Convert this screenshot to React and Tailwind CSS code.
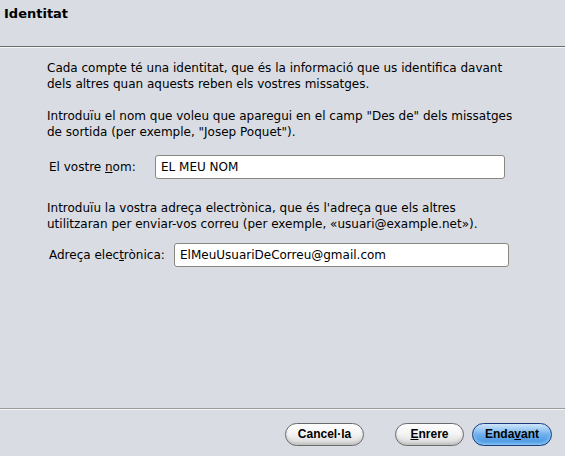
export default function App() {
    const font = { fontFamily: '"DejaVu Sans", sans-serif' };
    return (
        <div className="w-[565px] h-[456px] bg-[#d9dce3] flex flex-col text-black text-[12px]" style={font}>
            <div className="h-[46px] pl-[4px] pt-[4px] font-bold text-[13px]">Identitat</div>
            <div className="h-px bg-[#6e6e6e]" />
            <div className="h-px bg-[#f4f5f7]" />
            <div className="flex-1 pl-[47px] pr-[40px] pt-[12px] leading-[16px]">
                <p>Cada compte té una identitat, que és la informació que us identifica davant<br />dels altres quan aquests reben els vostres missatges.</p>
                <p className="mt-[16px]">Introduïu el nom que voleu que aparegui en el camp "Des de" dels missatges<br />de sortida (per exemple, "Josep Poquet").</p>
                <div className="flex items-center mt-[15px] pl-[2px]">
                    <label className="w-[106px]">El vostre <span className="underline">n</span>om:</label>
                    <input defaultValue="EL MEU NOM" className="w-[350px] h-[24px] bg-white border border-[#8a8680] rounded-[3px] px-[5px] outline-none" style={font} />
                </div>
                <p className="mt-[21px]">Introduïu la vostra adreça electrònica, que és l'adreça que els altres<br />utilitzaran per enviar-vos correu (per exemple, «usuari@example.net»).</p>
                <div className="flex items-center mt-[11px] pl-[2px]">
                    <label className="w-[125px]">Adreça elec<span className="underline">t</span>rònica:</label>
                    <input defaultValue="ElMeuUsuariDeCorreu@gmail.com" className="w-[335px] h-[24px] bg-white border border-[#8a8680] rounded-[3px] px-[5px] outline-none" style={font} />
                </div>
            </div>
            <div className="h-px bg-[#9a9a9a]" />
            <div className="h-px bg-[#f4f5f7]" />
            <div className="h-[46px] flex items-center pr-[13px] pt-[2px]" style={{ fontFamily: '"Liberation Sans", Arial, sans-serif' }}>
                <div className="flex-1" />
                <button className="w-[79px] h-[23px] rounded-full border border-[#6a6a6a] bg-gradient-to-b from-white via-[#f3f3f3] to-[#d6d6d6] font-bold text-[12px] shadow-[inset_0_-2px_3px_rgba(0,0,0,0.12)]">Cancel·la</button>
                <button className="ml-[31px] w-[69px] h-[23px] rounded-full border border-[#6a6a6a] bg-gradient-to-b from-white via-[#f3f3f3] to-[#d6d6d6] font-bold text-[12px] shadow-[inset_0_-2px_3px_rgba(0,0,0,0.12)]"><span className="underline">E</span>nrere</button>
                <button className="ml-[8px] w-[80px] h-[23px] rounded-full border border-[#1c3b7a] bg-gradient-to-b from-[#cfe6fb] via-[#6fb0ec] to-[#3d8ee0] font-bold text-[12px] shadow-[inset_0_-2px_3px_rgba(180,230,255,0.6)]">Enda<span className="underline">v</span>ant</button>
            </div>
        </div>
    );
}
